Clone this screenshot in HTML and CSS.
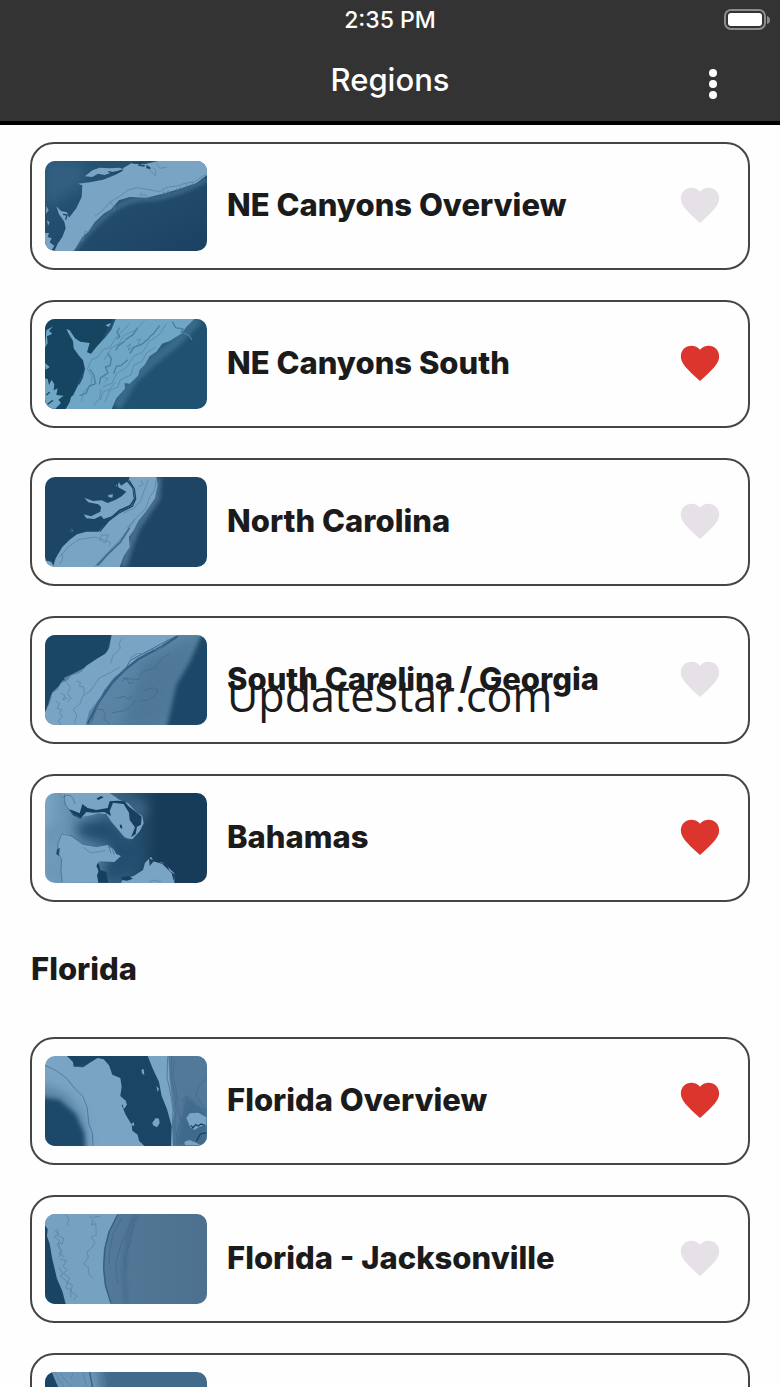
FILE: index.html
```html
<!DOCTYPE html>
<html lang="en">
<head>
  <meta charset="UTF-8" />
  <meta name="viewport" content="width=device-width, initial-scale=1.0"/>
  <title>Regions</title>
  <link rel="stylesheet" href="styles.css">
</head>
<body>
  <!-- shared shapes -->
  <svg class="defs" width="0" height="0" aria-hidden="true">
    <defs>
      <symbol id="heart" viewBox="0 0 24 24">
        <path d="M12 21.35l-1.45-1.32C5.4 15.36 2 12.28 2 8.5 2 5.42 4.42 3 7.5 3c1.74 0 3.41.81 4.5 2.09C13.09 3.81 14.76 3 16.5 3 19.58 3 22 5.42 22 8.5c0 3.78-3.4 6.86-8.55 11.54L12 21.35z"/>
      </symbol>
      <linearGradient id="deep" x1="0" y1="0" x2="1" y2="1">
        <stop offset="0" stop-color="#285676"/>
        <stop offset="1" stop-color="#1c4162"/>
      </linearGradient>
      <linearGradient id="atlantic" x1="0" y1="0" x2="1" y2="0">
        <stop offset="0" stop-color="#587f9f"/>
        <stop offset="1" stop-color="#4c708e"/>
      </linearGradient>
      <linearGradient id="bank" x1="0" y1="0" x2="1" y2="0">
        <stop offset="0" stop-color="#7ba5c4"/>
        <stop offset="0.3" stop-color="#527b9b"/>
        <stop offset="0.55" stop-color="#27506f"/>
        <stop offset="0.7" stop-color="#173c5a"/>
      </linearGradient>
      <filter id="soft" x="-50%" y="-50%" width="200%" height="200%">
        <feGaussianBlur stdDeviation="7"/>
      </filter>
      <filter id="haze" x="-50%" y="-50%" width="200%" height="200%">
        <feGaussianBlur stdDeviation="16"/>
      </filter>
    </defs>
  </svg>

  <div class="screen">
    <header class="header">
      <div class="status">
        <span class="time">2:35 PM</span>
        <svg class="battery" viewBox="0 0 46 22" aria-hidden="true">
          <rect x="1" y="1" width="40" height="19" rx="6" fill="none" stroke="#8c8c8c" stroke-width="2"/>
          <rect x="4" y="4" width="34" height="13" rx="3" fill="#fff"/>
          <path d="M43 7q3 1 3 4t-3 4z" fill="#8c8c8c"/>
        </svg>
      </div>
      <div class="titlebar">
        <h1>Regions</h1>
        <button type="button" class="menu" aria-label="More options">
          <svg viewBox="0 0 8 32" aria-hidden="true"><circle cx="4" cy="5" r="4"/><circle cx="4" cy="16" r="4"/><circle cx="4" cy="27" r="4"/></svg>
        </button>
      </div>
    </header>

    <main class="content">
      <ul class="list">
        <li class="card">
          <svg class="thumb" viewBox="46 30 486 270" aria-hidden="true">
            <rect x="46" y="30" width="486" height="270" fill="url(#deep)"/>
            <path d="M46 30H160V100L80 150L46 165z" fill="#315f80" filter="url(#haze)"/>
            <path d="M532 85C480 112 430 134 375 142C320 140 285 150 255 174C225 190 195 225 165 255L130 300" fill="none" stroke="#47708f" stroke-width="12" filter="url(#soft)"/>
            <path class="shelf" d="M282 50L305 37L345 40L385 30H532V72L500 96L455 112L400 128L350 140L300 138L268 148L245 174L222 188L195 214L176 242L158 258L142 285L132 300H74L84 278L98 258L108 232L104 212L88 190L80 166L94 180L112 184L118 200L140 172L156 138L158 103L145 98L180 94L220 86L256 72L278 60z"/>
            <path class="shelf" d="M166 76L188 58L210 50L240 52L268 50L284 55L252 62L225 72L205 68L188 78z"/>
            <path class="shelf" d="M46 246L58 246L54 258L66 262L60 274L74 284L64 300H46zM50 165L57 178L49 188zM52 208L60 214L55 224z"/>
            <path class="ink" d="M310 36L335 36L328 42L345 45M350 44L362 52L350 50M236 62L258 67L278 57M100 190L112 192L108 206"/>
            <path class="line" d="M528 70L495 92L470 96L440 105L410 109L390 122L360 116L320 110L294 118L270 136L244 151L216 181L196 195M240 151L256 170L252 180M330 135l5-9 5 8 8-4 2 8M398 132l4-10 6 8 8-12 2 10M440 112l4 8M450 105l6 9M468 96l4 12M486 93l5 10M380 36l10 16 22-4M370 50l8 8 0 18-8 -8-12-14M145 280l10-16 4 6 8-30 8 4 10-14"/>
          </svg>
          <span class="name">NE Canyons Overview</span>
          <button type="button" class="fav" aria-label="Favorite NE Canyons Overview" aria-pressed="false"><svg aria-hidden="true"><use href="#heart"/></svg></button>
        </li>

        <li class="card">
          <svg class="thumb teal" viewBox="46 26 486 270" aria-hidden="true">
            <rect x="46" y="26" width="486" height="270" fill="#205170"/>
            <path d="M46 26H250L200 120L162 180L110 296H46z" fill="#164562"/>
            <path d="M505 26L440 94L370 150L310 206L260 290" fill="none" stroke="#386a88" stroke-width="30" filter="url(#soft)"/>
            <path class="shelf" d="M258 26H494L470 50L455 70L420 92L398 100L380 124L360 138L345 164L330 178L325 196L300 220L285 218L286 235L260 264L246 296H108L120 276L124 260L134 252L150 222L160 202L166 176L160 150L148 136L132 114L130 92L118 72L110 56L120 60L136 84L152 94L180 98L172 126L184 130L202 108L228 80L245 58z"/>
            <path class="shelf" d="M46 204L54 206L58 224L66 208L74 222L72 240L84 234L80 254L102 256L86 268L94 278L76 296H46zM50 60L70 48L58 62L68 70L52 78L54 98L46 112zM46 158L60 170L48 178zM228 44L244 38L236 54zM132 252L148 220L152 232L138 256z"/>
            <path class="ink" d="M126 150l8 10M50 254L60 246M54 282l16-12M152 168l8 0M230 48l10 5"/>
            <path class="line heavy" d="M428 34l10 18 22 4-5 10 22 8 10 15M270 52l-8 14 8 12-8 8M286 92l-20 14-8 14M324 53l-14 20-24 16M390 46l-20 26-12 8M235 130l10 16-4 20-14 4 8 18-22 14-4 20M180 176l12 18 6 26-20 8-8 20-20 8M294 148l-20 18-14 2-8 22M360 82l-24 20-22 8-14 20"/>
            <path class="line" d="M345 30l-28 30-35 15-14 25-24 14-20 34M410 40l-20 32-32 22-18 30-28 14-22 34-30 18-12 28-28 12M378 110l-28 18-12 24-26 12-8 30-32 14-8 22-24 10-14 36M300 40l-40 40-20 32-18 4-18 24-20 10M185 150l-12 26 14 24-4 24-20 20-8 30M214 235l-4 30-18 20M258 215l-18 22-20 8-8 24M290 110l12-9-6 18 14-8M320 90l12-4-7 18M220 200l16 5-12 10"/>
          </svg>
          <span class="name">NE Canyons South</span>
          <button type="button" class="fav on" aria-label="Favorite NE Canyons South" aria-pressed="true"><svg aria-hidden="true"><use href="#heart"/></svg></button>
        </li>

        <li class="card">
          <svg class="thumb" viewBox="46 26 486 270" aria-hidden="true">
            <rect x="46" y="26" width="486" height="270" fill="#1d4566"/>
            <path d="M384 26L380 90L350 134L320 180L300 230L280 296" fill="none" stroke="#486f8e" stroke-width="22" filter="url(#soft)"/>
            <path class="shelf" d="M300 26H380L384 50L376 90L350 128L326 158L312 186L298 206L300 236L282 264L270 296H70L78 270L98 236L120 214L142 198L170 190L206 190L240 154L270 130L304 114L316 94L310 56L296 38z"/>
            <path class="shelf" d="M258 52L266 38L274 52L292 40L308 60L312 92L300 110L268 124L246 144L222 152L214 142L194 152L170 150L162 138L184 144L212 130L214 116L206 108L176 102L164 88L190 98L216 96L234 104L258 94L276 84L290 70zM46 276L64 280L74 296H46zM236 80L250 78L248 88L236 86z"/>
            <path class="ink" d="M298 36L314 62L318 92L308 114L268 134L236 158L210 190M260 32l4 24M268 28l-4 20"/>
            <path class="line" d="M120 186l8 4M126 180l4 10M380 34L374 66L360 86L348 120L314 154L292 180M356 34L344 66L332 100L312 120L282 134M90 266L116 236L146 214L198 206L226 224L236 200L216 200L210 210L242 222L240 232M290 190L262 226L226 260L194 296M316 152L286 200L248 238L210 290M90 288L100 268L96 254M326 56L340 48L334 36"/>
            <path d="M300 178L272 222L236 256L202 292" fill="none" stroke="#41698a" stroke-width="5"/>
          </svg>
          <span class="name">North Carolina</span>
          <button type="button" class="fav" aria-label="Favorite North Carolina" aria-pressed="false"><svg aria-hidden="true"><use href="#heart"/></svg></button>
        </li>

        <li class="card">
          <svg class="thumb" viewBox="46 30 486 270" aria-hidden="true">
            <rect x="46" y="30" width="486" height="270" fill="#5b84a4"/>
            <path d="M340 110L510 30L430 240L400 310H270z" fill="#507897" filter="url(#haze)"/>
            <path d="M520 20L480 110L440 180L410 310H550V20z" fill="#1d4667" filter="url(#soft)"/>
            <path d="M46 30H246L234 80L200 104L168 126L130 146L104 158L88 182L66 204L46 266z" fill="#1b4767"/>
            <path class="shelf" d="M246 30H446L408 60L340 96L290 130L250 160L210 220L178 260L168 300H46V262L62 230L68 204L84 194L94 174L112 168L124 152L154 142L170 122L204 100L226 88L240 68z"/>
            <path class="ink" d="M104 166l-14-22M94 170l-8-14M126 146l-4-14M66 206l-16 0M56 236l-12 4"/>
            <path d="M444 34L398 64L326 102L286 134L248 172L208 230L174 296" fill="none" stroke="#345f80" stroke-width="7"/>
            <path d="M438 34L392 58L302 106L286 134L260 154L226 194L204 240L184 296" fill="none" stroke="#436c8c" stroke-width="3"/>
            <path class="line" d="M278 38l-10 18 4 14-22 22-8 24M134 296l8-28-12-14 20-16 10-26 22-14 28-40 30-14 30-18M300 100l22-14 24 0 18-12 24-2 26-30M110 172l12 14-8 20 10 14-10 10M140 168l12 4-2 12 12 2 2 20M78 228l12 8-8 14 14 4-8 12 12 8-14 12 8 14M92 204l14 8-6 12 14-6"/>
            <path class="line dim" d="M276 170l16-12 6 18 14-4M344 196l30-8 12 14M384 190l-4 18-22 16-24 4M200 252l20 2 8 16-6 12 18 14M260 220l24-6 12 8 12-10M420 84l-24 18-20 26-36 12-14 24-48-4M246 264l42-8 32-30"/>
          </svg>
          <span class="name">South Carolina / Georgia</span>
          <button type="button" class="fav" aria-label="Favorite South Carolina / Georgia" aria-pressed="false"><svg aria-hidden="true"><use href="#heart"/></svg></button>
          <span class="watermark">UpdateStar.com</span>
        </li>

        <li class="card">
          <svg class="thumb" viewBox="46 27 486 270" aria-hidden="true">
            <rect x="46" y="27" width="486" height="270" fill="url(#bank)"/>
            <path d="M140 120L240 100L290 170L330 190L340 220L260 290H220L250 180L150 160z" fill="#244e6e" filter="url(#haze)"/>
            <path d="M290 40L350 60L345 90L330 110L290 60z" fill="#426a89" filter="url(#haze)"/>
            <path d="M46 130L110 120L80 150L60 200L80 290H46z" fill="#6791b1" filter="url(#haze)"/>
            <path class="shelf" d="M96 27H240L270 48L296 58L322 86L338 96L342 118L330 142L308 166L286 162L264 136L244 112L230 90L204 88L184 94L150 100L126 88L112 70L104 46z"/>
            <path class="shelf" d="M92 156L104 147L126 158L160 182L200 188L234 182L252 196L260 210L274 216L254 234L210 232L204 260L212 296H98L94 260L96 226L84 210L86 184z"/>
            <path class="shelf" d="M274 296L280 286L312 276L340 258L346 236L364 218L372 232L400 236L418 252L434 268L434 297H274z"/>
            <path d="M118 76L132 80L150 88L158 60L174 72L200 78L234 72L240 52L262 50L284 52L296 66L316 82L336 98L334 122L322 128L318 150L304 160L316 130L300 108L298 86L282 60L250 56L240 82L244 96L224 84L190 86L170 84L152 104L130 94zM206 234L212 258L230 264L236 296H206L202 272L208 262L200 246zM274 280L296 276L310 284L292 290L278 288zM358 222L368 228L376 226L392 236L410 240L420 260L436 272L432 290L426 268L408 250L398 240L372 232L360 246zM200 44l14-8 8 4-16 8zM82 196l8-4-2 24-8-6zM270 122l6 0 2 12-6-2z" fill="#183f5e"/>
            <path class="line dim" d="M104 30L106 60L124 86L152 102M98 40q30-20 38 20M96 152L84 180L86 210L96 226L94 260L98 294M98 150L126 156L160 180L200 188L236 182L244 208M250 120L280 156L302 170M236 190l10 0 8 22"/>
            <path class="line" d="M160 190L184 206L228 200M360 294l14-6 20 6"/>
          </svg>
          <span class="name">Bahamas</span>
          <button type="button" class="fav on" aria-label="Favorite Bahamas" aria-pressed="true"><svg aria-hidden="true"><use href="#heart"/></svg></button>
        </li>
      </ul>

      <h2>Florida</h2>

      <ul class="list">
        <li class="card">
          <svg class="thumb" viewBox="46 30 486 270" aria-hidden="true">
            <rect x="46" y="30" width="486" height="270" fill="#7aa4c4"/>
            <path d="M30 110L110 145L160 210L176 310H30z" fill="#5a83a3" filter="url(#haze)"/>
            <path d="M20 150L90 162L138 204L164 262L168 320H20z" fill="#1f4869" filter="url(#soft)"/>
            <path d="M112 30L130 48L132 62L160 64L184 48L204 36L222 40L238 58L248 86L272 96L276 122L272 150L290 166L276 178L288 206L306 236L308 254L324 266L328 284L344 300H424L426 240L412 190L396 150L388 108L370 70L354 30z" fill="#1a4565"/>
            <path d="M416 30H532V300H430L428 240L432 200L420 100z" fill="#53799a"/>
            <path d="M470 150L532 200V300H436L456 220z" fill="#416b8c" filter="url(#soft)"/>
            <path class="shelf" d="M368 230L378 216L388 218L390 232L382 244L370 238zM470 216L480 202L506 200L530 214V238L510 242L494 252L482 244zM464 288L478 282L500 290L512 298H466zM278 172l10-8 4 12-10 14zM302 236l10-8 2 12zM336 70l6 0 2 18-8-8zM380 120l8 8-4 10z"/>
            <path class="ink" d="M484 238l6 8 8-10 8 4 8-6 12 4M500 286l12-22 18-4"/>
            <path class="line dim" d="M46 58L80 74L112 98L134 126L160 152L172 182L178 236L188 260L190 300M414 32L412 94L422 140L430 190L428 236L434 296M426 32L424 92L434 140L440 194L434 240L446 294M434 40L430 90L440 136L446 190L454 226L440 270M456 168L470 150L492 180L526 190M530 96L506 120L500 150L532 196M470 160L464 190L460 226L476 248L496 262M448 208L472 260L460 294M132 60l20 2 10-6"/>
          </svg>
          <span class="name">Florida Overview</span>
          <button type="button" class="fav on" aria-label="Favorite Florida Overview" aria-pressed="true"><svg aria-hidden="true"><use href="#heart"/></svg></button>
        </li>

        <li class="card">
          <svg class="thumb" viewBox="46 30 486 270" aria-hidden="true">
            <rect x="46" y="30" width="486" height="270" fill="url(#atlantic)"/>
            <path d="M46 30H266L236 84L222 140L220 200L226 250L244 300H46z" fill="#76a1c1"/>
            <path d="M322 30L298 90L286 160L284 220L290 300" fill="none" stroke="#406988" stroke-width="9" filter="url(#soft)"/>
            <path d="M46 64L54 76L52 96L60 120L68 166L82 224L98 262L108 300H46z" fill="#194464"/>
            <path d="M264 32L238 84L226 132L222 190L228 246L244 298" fill="none" stroke="#365f7f" stroke-width="4"/>
            <path class="line" d="M108 32l10 12-6 16 8 8M72 76l14 14-12 8 16 12-8 14 12 16-6 10 16 8M82 74l4 22 16 6-4 18-12-4 10 30-8 14M92 166l18 4-10 18 12 8-10 12 18 14-8 14 16 6-4 20 18 14-10 12M88 190l12 20-8 6 22 18-6 18 14 4 2 24M180 34l10 16-4 14 12-6 2 34-16 8 12 14-10 18-14 12 4 16-14 20 14 10 2 20 12 14M192 40l20-4"/>
            <path class="line dim" d="M276 42L250 90L240 140L238 180M308 40L296 76L274 120L258 180L264 240M314 40l-12 70-16 50 4 36"/>
          </svg>
          <span class="name">Florida - Jacksonville</span>
          <button type="button" class="fav" aria-label="Favorite Florida - Jacksonville" aria-pressed="false"><svg aria-hidden="true"><use href="#heart"/></svg></button>
        </li>

        <li class="card">
          <svg class="thumb" viewBox="46 97 486 270" aria-hidden="true">
            <rect x="46" y="97" width="486" height="270" fill="#426b8b"/>
            <path d="M20 60H210L220 367H46z" fill="#6c96b5" filter="url(#haze)"/>
            <path d="M46 97H66L80 130L94 160L120 367H46z" fill="#1a4565"/>
            <path d="M180 97L190 150L230 367" fill="none" stroke="#345f80" stroke-width="4"/>
            <path class="line" d="M76 97L90 122L106 146M92 100l14 20 20 20M130 100l-6 18M160 97l10 44M204 97l10 44M220 97l6 44"/>
          </svg>
          <button type="button" class="fav" aria-label="Favorite" aria-pressed="false"><svg aria-hidden="true"><use href="#heart"/></svg></button>
        </li>
      </ul>
    </main>
  </div>

  <script>
    document.querySelectorAll('.fav').forEach(function (btn) {
      btn.addEventListener('click', function () {
        const on = btn.classList.toggle('on');
        btn.setAttribute('aria-pressed', on);
      });
    });
  </script>
</body>
</html>
```
FILE: styles.css
```css
* {
  box-sizing: border-box;
}
body {
  margin: 0;
  font-family: Inter, "Liberation Sans", sans-serif;
  background: #fefefe;
  color: #1b1b1c;
}
.defs {
  position: absolute;
}
.screen {
  display: flex;
  flex-direction: column;
  height: 100vh;
}

/* header */
.header {
  flex: none;
  background: #333;
  color: #fff;
  border-bottom: 4px solid #000;
}
.status,
.titlebar {
  display: grid;
  grid-template-columns: 1fr auto 1fr;
  align-items: center;
}
.status {
  height: 40px;
  padding: 0 10px;
}
.time {
  grid-column: 2;
  font-size: 23px;
  font-weight: 500;
}
.battery {
  justify-self: end;
  width: 46px;
  height: 22px;
}
.titlebar {
  height: 81px;
  padding: 0 52px;
}
.titlebar h1 {
  grid-column: 2;
  margin: 0;
  padding-bottom: 2px;
  font-size: 31px;
  font-weight: 500;
  line-height: 40px;
}
.menu {
  justify-self: end;
  display: flex;
  padding: 14px 10px 8px;
  border: none;
  background: none;
  cursor: pointer;
}
.menu svg {
  width: 10px;
  height: 32px;
  fill: #fff;
}

/* region list */
.content {
  flex: 1;
  min-height: 0;
  padding: 17px 30px 30px;
  overflow-y: auto;
  scrollbar-width: none;
}
.list {
  display: flex;
  flex-direction: column;
  gap: 30px;
  margin: 0;
  padding: 0;
  list-style: none;
}
.card {
  position: relative;
  display: flex;
  align-items: center;
  gap: 20px;
  height: 128px;
  padding: 0 25px 0 13px;
  border: 2px solid #454446;
  border-radius: 24px;
}
.thumb {
  flex: none;
  width: 162px;
  height: 90px;
  border-radius: 10px;
}
.shelf {
  fill: #7aa4c4;
}
.teal .shelf {
  fill: #6fa6c6;
}
.ink {
  fill: none;
  stroke: #1b4464;
  stroke-width: 4;
}
.line {
  fill: none;
  stroke: #567f9f;
  stroke-width: 2;
}
.line.dim {
  stroke: #3f6888;
}
.line.heavy {
  stroke-width: 4;
  stroke: #4a7e9e;
}
.name {
  flex: 1;
  padding-bottom: 2px;
  font-size: 31px;
  font-weight: 800;
  line-height: 40px;
}
.fav {
  display: flex;
  margin-left: auto;
  padding: 0 0 2px;
  border: none;
  background: none;
  color: #e5e1e6;
  cursor: pointer;
}
.fav svg {
  width: 46px;
  height: 46px;
  fill: currentColor;
}
.fav.on {
  color: #dc352d;
}
.content h2 {
  margin: 0;
  padding: 47px 1px 48px;
  font-size: 31px;
  font-weight: 800;
  line-height: 40px;
}

/* sits over the card text */
.watermark {
  position: absolute;
  left: 195px;
  top: 48px;
  font-family: "Open Sans", "Noto Sans", sans-serif;
  font-size: 43px;
  font-weight: 400;
  line-height: 60px;
}
```
